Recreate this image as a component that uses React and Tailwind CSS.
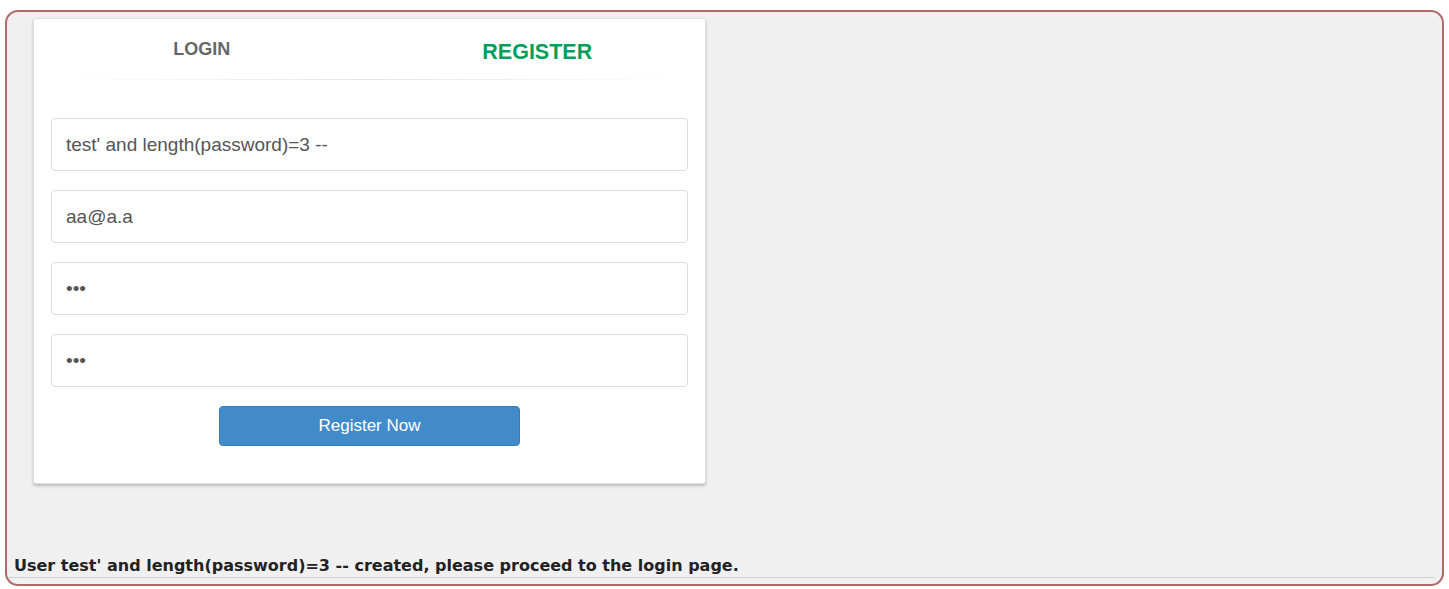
import React from "react";

function Field({ type = "text", value }) {
  return (
    <input
      type={type}
      defaultValue={value}
      className="w-full h-[53px] px-[14px] bg-white border border-[#dcdcdc] rounded-[4px] text-[19px] text-[#555] outline-none"
    />
  );
}

export default function App() {
  return (
    <div className="bg-white w-full h-[589px] pt-[10px] px-[5px] font-['Liberation_Sans',Arial,sans-serif]">
      <div className="h-[576px] border-2 border-[#b06868] rounded-[13px] bg-[#f0f0f0] flex flex-col pt-[6px] pl-[26px] pr-[6px]">
        <div className="w-[673px] h-[466px] bg-white rounded-[3px] border border-[#dedede] shadow-[0_2px_3px_rgba(0,0,0,0.22)]">
          <div className="flex h-[60px]">
            <div className="w-1/2 flex justify-center pt-[21px] text-[18px] font-bold text-[#666] leading-none">
              LOGIN
            </div>
            <div className="w-1/2 flex justify-center pt-[23px] text-[21.5px] font-bold text-[#029f5b] leading-none">
              REGISTER
            </div>
          </div>
          <div className="h-px mx-[26px] bg-gradient-to-r from-transparent via-[#e4e4e4] to-transparent" />
          <form className="flex flex-col gap-[19px] pt-[38px] px-[17px]">
            <Field value="test' and length(password)=3 --" />
            <Field value="aa@a.a" />
            <Field type="password" value="abc" />
            <Field type="password" value="abc" />
            <div className="flex justify-center">
              <button
                type="button"
                className="w-[301px] h-[40px] bg-[#428bca] border border-[#357ebd] rounded-[4px] text-white text-[17px]"
              >
                Register Now
              </button>
            </div>
          </form>
        </div>
        <div className="mt-auto -ml-[24px] mr-[1px] mb-[6px] border-b border-[#cfcfcf] pb-[1px]">
          <p className="font-['DejaVu_Sans',Verdana,sans-serif] text-[16px] font-bold text-[#222] leading-[20px] pl-[5px]">
            User test' and length(password)=3 -- created, please proceed to the login page.
          </p>
        </div>
      </div>
    </div>
  );
}
